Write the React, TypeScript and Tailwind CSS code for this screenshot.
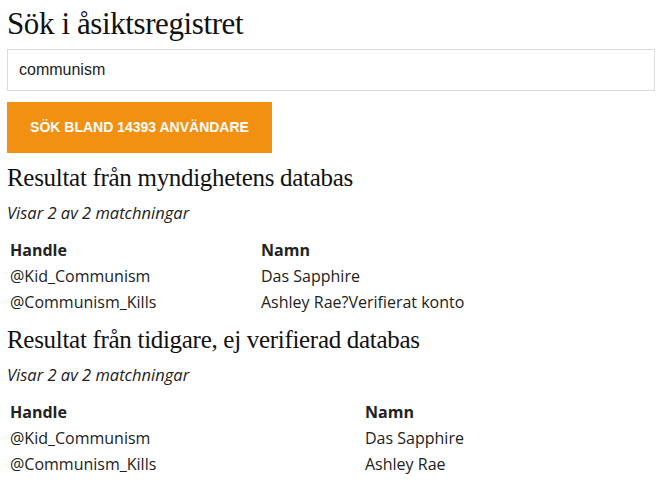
import React from "react";

const serif = "font-['Liberation_Serif','Times_New_Roman',serif]";
const sans = "font-['Open_Sans',sans-serif]";

type Row = { handle: string; name: string };

const FIRST: Row[] = [
  { handle: "@Kid_Communism", name: "Das Sapphire" },
  { handle: "@Communism_Kills", name: "Ashley Rae?Verifierat konto" },
];

const SECOND: Row[] = [
  { handle: "@Kid_Communism", name: "Das Sapphire" },
  { handle: "@Communism_Kills", name: "Ashley Rae" },
];

function Results({ title, rows, handleWidth }: { title: string; rows: Row[]; handleWidth: string }) {
  return (
    <section className="mt-[10px]">
      <h2 className={`${serif} text-[25px] leading-[30px] text-[#111] tracking-[-0.3px]`}>{title}</h2>
      <p className={`${sans} italic text-[16.5px] leading-[20px] text-[#222] mt-[10px]`}>Visar 2 av 2 matchningar</p>
      <table className={`${sans} text-[16px] text-[#222] mt-[14px] border-collapse`}>
        <thead>
          <tr>
            <th className={`${handleWidth} text-left font-bold px-[3px] h-[26px] align-middle`}>Handle</th>
            <th className="text-left font-bold px-[3px] h-[26px] align-middle">Namn</th>
          </tr>
        </thead>
        <tbody>
          {rows.map((r) => (
            <tr key={r.handle}>
              <td className="px-[3px] h-[26px] align-middle">{r.handle}</td>
              <td className="px-[3px] h-[26px] align-middle">{r.name}</td>
            </tr>
          ))}
        </tbody>
      </table>
    </section>
  );
}

export default function App() {
  return (
    <div className="bg-white w-[661px] h-[500px] px-[7px] pt-[4px] overflow-hidden">
      <h1 className={`${serif} text-[31px] leading-[40px] text-[#111] tracking-[-0.4px]`}>Sök i åsiktsregistret</h1>
      <input
        readOnly
        value="communism"
        className="block mt-[5px] w-[648px] h-[42px] border border-[#dcdcdc] px-[11px] font-['Liberation_Sans',Arial,sans-serif] text-[16px] text-[#222] outline-none"
      />
      <button className="block mt-[11px] w-[265px] h-[51px] bg-[#f29111] text-white font-['Liberation_Sans',Arial,sans-serif] font-bold text-[14px] uppercase">
        Sök bland 14393 användare
      </button>
      <Results title="Resultat från myndighetens databas" rows={FIRST} handleWidth="w-[251px]" />
      <Results title="Resultat från tidigare, ej verifierad databas" rows={SECOND} handleWidth="w-[355px]" />
    </div>
  );
}
